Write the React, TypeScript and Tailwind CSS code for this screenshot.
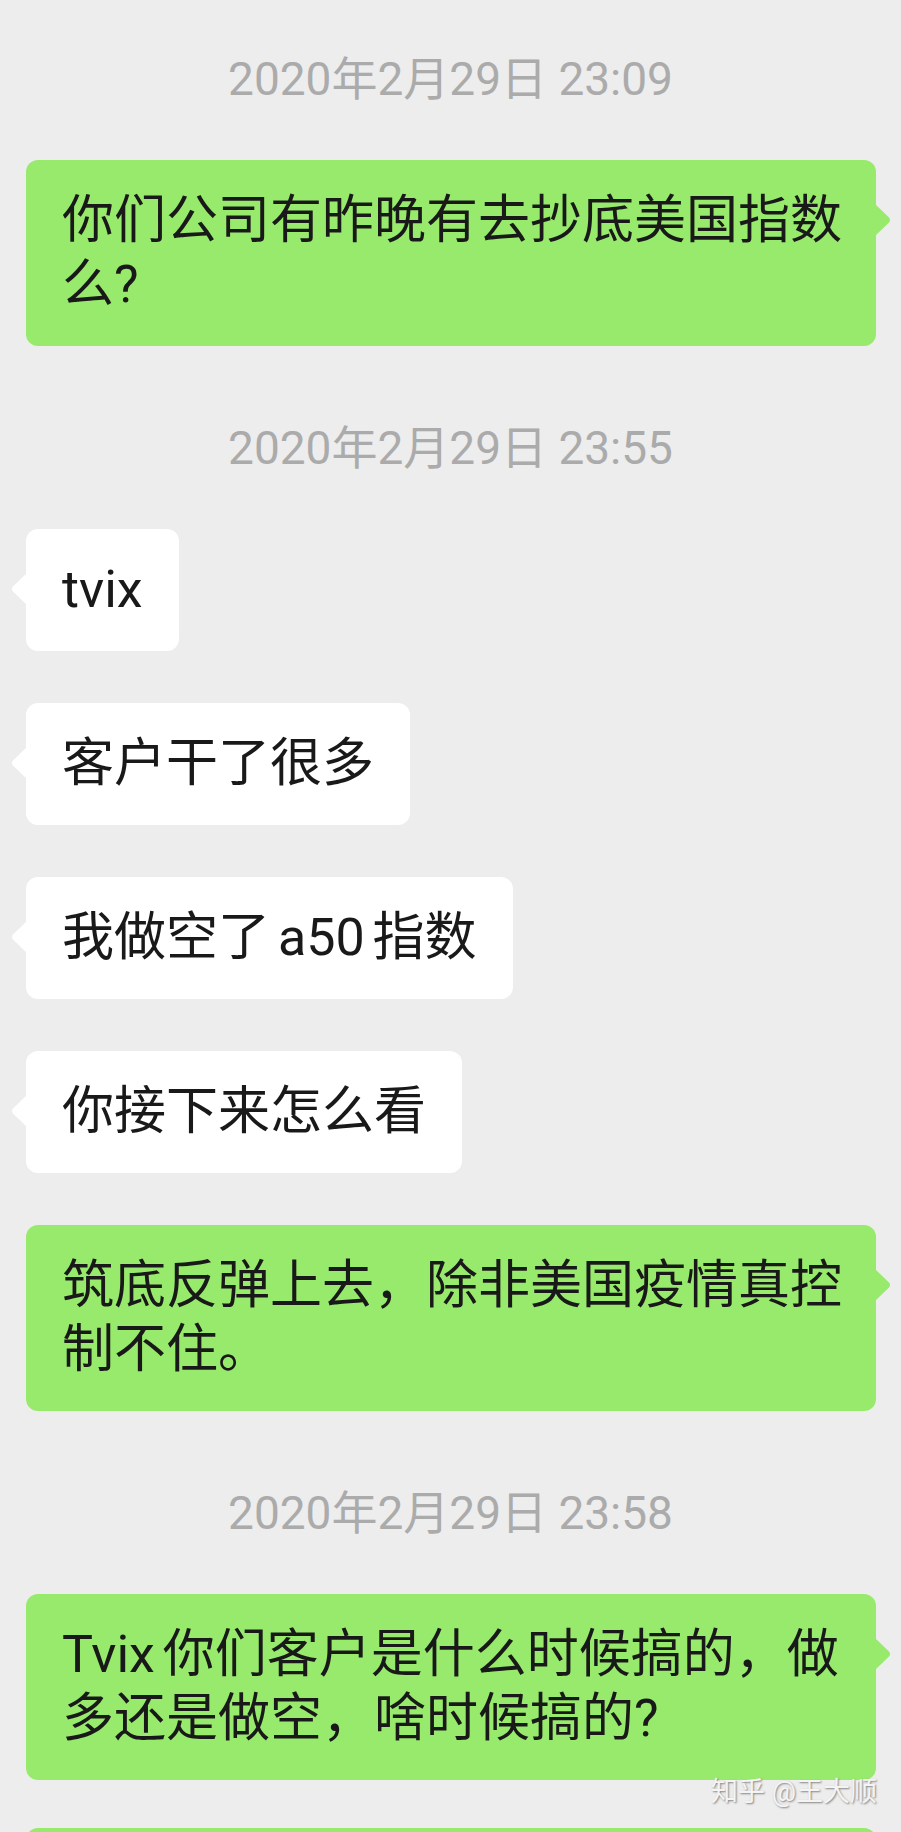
import React from "react";

type Item =
  | { kind: "time"; text: string }
  | { kind: "msg"; side: "left" | "right"; lines: string[] };

const items: Item[] = [
  { kind: "time", text: "2020年2月29日 23:09" },
  { kind: "msg", side: "right", lines: ["你们公司有昨晚有去抄底美国指数", "么?"] },
  { kind: "time", text: "2020年2月29日 23:55" },
  { kind: "msg", side: "left", lines: ["tvix"] },
  { kind: "msg", side: "left", lines: ["客户干了很多"] },
  { kind: "msg", side: "left", lines: ["我做空了 a50 指数"] },
  { kind: "msg", side: "left", lines: ["你接下来怎么看"] },
  { kind: "msg", side: "right", lines: ["筑底反弹上去，除非美国疫情真控", "制不住。"] },
  { kind: "time", text: "2020年2月29日 23:58" },
  { kind: "msg", side: "right", lines: ["Tvix 你们客户是什么时候搞的，做", "多还是做空，啥时候搞的?"] },
];

const font = { fontFamily: 'Roboto, "Noto Sans CJK SC", sans-serif' };

function Tail({ side, color }: { side: "left" | "right"; color: string }) {
  if (side === "right") {
    return (
      <svg
        width="17"
        height="32"
        viewBox="0 0 17 32"
        className="absolute top-[44px] right-[-16px]"
      >
        <path d="M0 0 L14 13.5 Q16 16 14 18.5 L0 32 Z" fill={color} />
      </svg>
    );
  }
  return (
    <svg
      width="17"
      height="32"
      viewBox="0 0 17 32"
      className="absolute top-[44px] left-[-16px]"
    >
      <path d="M17 0 L3 13.5 Q1 16 3 18.5 L17 32 Z" fill={color} />
    </svg>
  );
}

function Bubble({ side, lines }: { side: "left" | "right"; lines: string[] }) {
  const green = side === "right";
  return (
    <div className={green ? "flex justify-end pr-[25px]" : "flex justify-start pl-[26px]"}>
      <div
        className={`relative rounded-[12px] py-[29px] px-[36px] text-[52px] leading-[64px] text-[#191919] whitespace-nowrap [word-spacing:-5px] ${
          green ? "bg-[#97ea6b] w-[850px]" : "bg-white"
        }`}
      >
        {lines.map((l, i) => (
          <div key={i}>{l}</div>
        ))}
        <Tail side={side} color={green ? "#97ea6b" : "#ffffff"} />
      </div>
    </div>
  );
}

export default function App() {
  return (
    <div
      className="relative w-full h-[1832px] overflow-hidden bg-[#ededed]"
      style={font}
    >
      <div className="flex flex-col gap-[52px] pt-[50px]">
        {items.map((item, i) =>
          item.kind === "time" ? (
            <div
              key={i}
              className={`h-[58px] flex items-center justify-center text-[46px] text-[#ababab] ${
                i === 0 ? "" : "mt-[21px]"
              }`}
            >
              {item.text}
            </div>
          ) : (
            <Bubble key={i} side={item.side} lines={item.lines} />
          )
        )}
        {/* next message, only its top edge is on screen */}
        <div className="flex justify-end pr-[25px] -mt-[4px]">
          <div className="w-[850px] h-[120px] rounded-[12px] bg-[#97ea6b]" />
        </div>
      </div>

      {/* watermark */}
      <div className="absolute top-[1774px] right-[24px] text-[27px] leading-[36px] text-[#f4f4f4] [text-shadow:1px_1px_2px_rgba(0,0,0,0.45)]">
        知乎 @王大顺
      </div>
    </div>
  );
}
